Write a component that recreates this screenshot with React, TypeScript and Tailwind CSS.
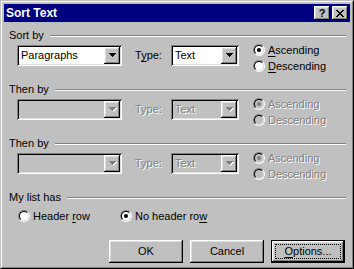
import React from 'react';

const raised = 'shadow-[inset_-1px_-1px_#000,inset_1px_1px_#fff,inset_-2px_-2px_#808080,inset_2px_2px_#dfdfdf]';
const sunken = 'shadow-[inset_1px_1px_#808080,inset_-1px_-1px_#fff,inset_2px_2px_#000,inset_-2px_-2px_#dfdfdf]';
const dim = 'text-[#808080] [text-shadow:1px_1px_0_#fff]';

function Label({ text, u, disabled }: { text: string; u?: number; disabled?: boolean }) {
  if (disabled) return <span className={dim}>{text}</span>;
  if (u === undefined) return <span>{text}</span>;
  return (
    <span>
      {text.slice(0, u)}
      <span className="underline underline-offset-[2px]">{text[u]}</span>
      {text.slice(u + 1)}
    </span>
  );
}

function Arrow({ disabled }: { disabled?: boolean }) {
  const d = 'M0 0h7v1H0zM1 1h5v1H1zM2 2h3v1H2zM3 3h1v1H3z';
  return (
    <svg width="8" height="5" viewBox="0 0 8 5" className="ml-[1px]">
      {disabled && <path d={d} fill="#fff" transform="translate(1 1)" />}
      <path d={d} fill={disabled ? '#808080' : '#000'} />
    </svg>
  );
}

function Combo({ width, value, disabled }: { width: string; value?: string; disabled?: boolean }) {
  return (
    <div className={`${width} ${sunken} ${disabled ? 'bg-[#c0c0c0]' : 'bg-white'} h-[21px] p-[2px] flex`}>
      <div className={`flex-1 pl-[2px] leading-[17px] ${disabled ? dim : ''}`}>{value}</div>
      <div className={`${raised} bg-[#c0c0c0] w-[16px] h-[17px] flex items-center justify-center`}>
        <Arrow disabled={disabled} />
      </div>
    </div>
  );
}

function Radio({ text, u, checked, disabled }: { text: string; u?: number; checked?: boolean; disabled?: boolean }) {
  return (
    <div className="flex items-center h-[16px] gap-[3px]">
      <div className="w-[12px] h-[12px] shrink-0 rounded-full border border-t-[#808080] border-l-[#808080] border-r-white border-b-white">
        <div className={`w-full h-full rounded-full border border-t-black border-l-black border-r-[#dfdfdf] border-b-[#dfdfdf] flex items-center justify-center ${disabled ? 'bg-[#c0c0c0]' : 'bg-white'}`}>
          {checked && <div className={`w-[4px] h-[4px] rounded-full ${disabled ? 'bg-[#808080]' : 'bg-black'}`} />}
        </div>
      </div>
      <Label text={text} u={u} disabled={disabled} />
    </div>
  );
}

function Header({ text }: { text: string }) {
  return (
    <div className="flex items-center h-[13px] pl-[5px] pr-[4px]">
      <span>{text}</span>
      <div className="flex-1 ml-[6px] h-[2px] border-t border-t-[#808080] border-b border-b-white" />
    </div>
  );
}

function SortSection({ title, field, disabled }: { title: string; field?: string; disabled?: boolean }) {
  return (
    <div className="h-[54px]">
      <Header text={title} />
      <div className="flex pl-[13px]">
        <div className="flex items-center mt-[3px] h-[21px]">
          <Combo width="w-[105px]" value={field} disabled={disabled} />
          <div className="w-[36px] ml-[13px]">
            <Label text="Type:" u={1} disabled={disabled} />
          </div>
          <Combo width="w-[68px]" value="Text" disabled={disabled} />
        </div>
        <div className="flex flex-col ml-[14px]">
          <Radio text="Ascending" u={0} checked disabled={disabled} />
          <Radio text="Descending" u={0} disabled={disabled} />
        </div>
      </div>
    </div>
  );
}

function Button({ text, u, focused }: { text: string; u?: number; focused?: boolean }) {
  return (
    <div className={`relative w-[74px] h-[23px] flex items-center justify-center ${focused ? 'border border-black' : ''}`}>
      <div className={`absolute ${focused ? 'inset-0' : 'inset-0'} ${raised}`} />
      {focused && <div className="absolute inset-[3px] border border-dotted border-black" />}
      <span className="relative">
        <Label text={text} u={u} />
      </span>
    </div>
  );
}

export default function App() {
  return (
    <div className="w-[354px] h-[269px] bg-[#c0c0c0] border border-t-[#c0c0c0] border-l-[#c0c0c0] border-r-black border-b-black font-['Liberation_Sans',Arial,sans-serif] text-[11px] leading-[13px] text-black select-none">
      <div className="w-full h-full border border-t-white border-l-white border-r-[#808080] border-b-[#808080] p-[2px] flex flex-col">
        {/* Title bar */}
        <div className="h-[18px] bg-[#000080] flex items-center justify-between pl-[2px] pr-[2px] shrink-0">
          <span className="text-white font-bold text-[12px]">Sort Text</span>
          <div className="flex gap-[2px]">
            <div className={`${raised} bg-[#c0c0c0] w-[16px] h-[14px] flex items-center justify-center font-bold text-[11px] leading-[14px]`}>?</div>
            <div className={`${raised} bg-[#c0c0c0] w-[16px] h-[14px] flex items-center justify-center`}>
              <svg width="8" height="7" viewBox="0 0 8 7">
                <path
                  d="M0 0h2v1H0zM6 0h2v1H6zM1 1h2v1H1zM5 1h2v1H5zM2 2h4v1H2zM3 3h2v1H3zM2 4h4v1H2zM1 5h2v1H1zM5 5h2v1H5zM0 6h2v1H0zM6 6h2v1H6z"
                  fill="#000"
                />
              </svg>
            </div>
          </div>
        </div>

        <div className="pt-[7px] flex flex-col">
          <SortSection title="Sort by" field="Paragraphs" />
          <SortSection title="Then by" disabled />
          <SortSection title="Then by" disabled />

          <Header text="My list has" />
          <div className="flex pl-[14px] mt-[4px]">
            <div className="w-[102px]">
              <Radio text="Header row" u={7} />
            </div>
            <Radio text="No header row" u={12} checked />
          </div>

          <div className="flex justify-end gap-[7px] pr-[5px] mt-[16px]">
            <Button text="OK" />
            <Button text="Cancel" />
            <Button text="Options..." u={0} focused />
          </div>
        </div>
      </div>
    </div>
  );
}
